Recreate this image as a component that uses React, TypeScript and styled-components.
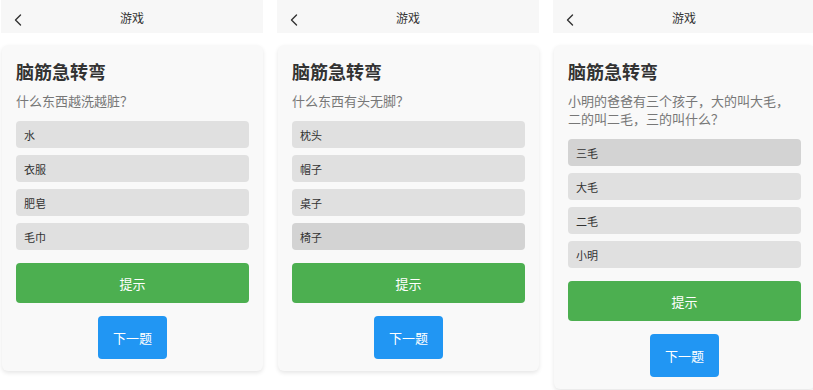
import { createGlobalStyle, styled } from 'styled-components';

type Quiz = {
  question: string;
  options: string[];
  selected?: number;
};

const quizzes: Quiz[] = [
  {
    question: '什么东西越洗越脏？',
    options: ['水', '衣服', '肥皂', '毛巾'],
  },
  {
    question: '什么东西有头无脚？',
    options: ['枕头', '帽子', '桌子', '椅子'],
    selected: 3,
  },
  {
    question: '小明的爸爸有三个孩子，大的叫大毛，二的叫二毛，三的叫什么？',
    options: ['三毛', '大毛', '二毛', '小明'],
    selected: 0,
  },
];

export default function App() {
  return (
    <>
      <GlobalStyle />
      <Screens>
        {quizzes.map((quiz, i) => (
          <Phone key={i}>
            <Header>
              <BackButton aria-label="back">
                <svg width="8" height="12" viewBox="0 0 8 12">
                  <path
                    d="M6.5 1 L1.5 6 L6.5 11"
                    fill="none"
                    stroke="#333"
                    strokeWidth="1.4"
                    strokeLinecap="round"
                    strokeLinejoin="round"
                  />
                </svg>
              </BackButton>
              <HeaderTitle>游戏</HeaderTitle>
            </Header>
            <Card>
              <Title>脑筋急转弯</Title>
              <Question>{quiz.question}</Question>
              <OptionList>
                {quiz.options.map((option, j) => (
                  <Option key={option} $selected={quiz.selected === j}>
                    {option}
                  </Option>
                ))}
              </OptionList>
              <HintButton>提示</HintButton>
              <NextButton>下一题</NextButton>
            </Card>
          </Phone>
        ))}
      </Screens>
    </>
  );
}

const GlobalStyle = createGlobalStyle`
  body {
    margin: 0;
    background: #ffffff;
    font-family: "Noto Sans CJK SC", "Noto Sans", sans-serif;
    color: #333;
  }
`;

const Screens = styled.div`
  display: flex;
  gap: 14px;
  padding-left: 1px;
  width: 813px;
  height: 390px;
  overflow: hidden;
  box-sizing: border-box;
`;

const Phone = styled.div`
  flex: 0 0 262px;
  display: flex;
  flex-direction: column;
  gap: 12px;
`;

const Header = styled.div`
  position: relative;
  height: 33px;
  padding-top: 3px;
  box-sizing: border-box;
  display: flex;
  align-items: center;
  justify-content: center;
  background: #f7f7f7;
`;

const BackButton = styled.button`
  position: absolute;
  left: 11px;
  top: 14px;
  padding: 0;
  border: none;
  background: none;
  display: flex;
  width: 12px;
  height: 12px;
  align-items: center;
  justify-content: center;
`;

const HeaderTitle = styled.span`
  font-size: 12px;
  color: #333;
  line-height: 1;
`;

const Card = styled.div`
  margin: 0 0 0 1px;
  padding: 14px 14px 12px;
  background: #f9f9f9;
  border-radius: 6px;
  box-shadow: 0 2px 4px rgba(0, 0, 0, 0.1);
  display: flex;
  flex-direction: column;
`;

const Title = styled.h2`
  margin: 0;
  font-size: 18px;
  line-height: 24px;
  font-weight: 700;
  color: #333;
`;

const Question = styled.p`
  margin: 9px 0 0;
  font-size: 13px;
  line-height: 18px;
  color: #777;
`;

const OptionList = styled.div`
  margin-top: 11px;
  display: flex;
  flex-direction: column;
  gap: 7px;
`;

const Option = styled.div<{ $selected: boolean }>`
  height: 27px;
  padding-left: 8px;
  display: flex;
  align-items: center;
  font-size: 11px;
  color: #333;
  border-radius: 4px;
  background: ${({ $selected }) => ($selected ? '#d3d3d3' : '#e0e0e0')};
`;

const HintButton = styled.button`
  margin-top: 13px;
  height: 40px;
  border: none;
  border-radius: 4px;
  background: #4caf50;
  color: #ffffff;
  font-family: inherit;
  font-size: 13px;
`;

const NextButton = styled.button`
  margin: 13px auto 0;
  width: 69px;
  height: 43px;
  border: none;
  border-radius: 4px;
  background: #2196f3;
  color: #ffffff;
  font-family: inherit;
  font-size: 13px;
`;
